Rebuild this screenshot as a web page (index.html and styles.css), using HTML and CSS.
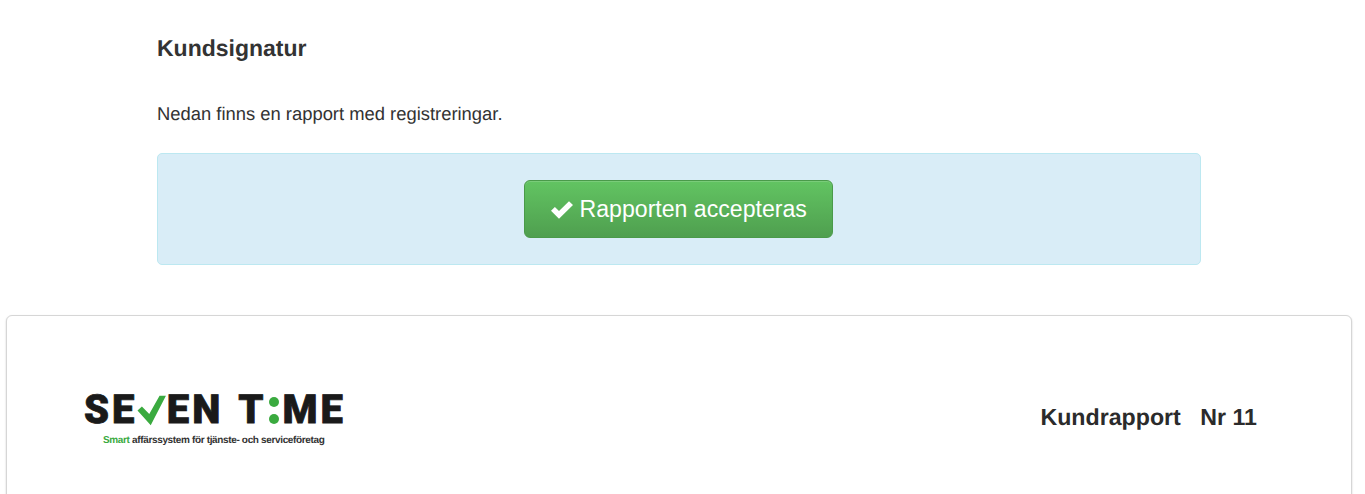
FILE: index.html
```html
<!DOCTYPE html>
<html lang="sv">

<head>
  <meta charset="UTF-8">
  <meta name="viewport" content="width=device-width, initial-scale=1.0">
  <title>Kundsignatur</title>
  <link rel="stylesheet" href="styles.css">
</head>

<body>
  <div class="page">
    <section class="signature">
      <h2>Kundsignatur</h2>
      <p>Nedan finns en rapport med registreringar.</p>
      <div class="alert">
        <button class="btn-success">
          <svg class="check-icon" viewBox="0 0 22 18" aria-hidden="true">
            <path d="M8 17.8 0 9.8 3.9 5.9 8 10 18 0.2 22 4.1z" />
          </svg>
          Rapporten accepteras
        </button>
      </div>
    </section>
    <section class="report-card">
      <div class="logo">
        <div class="logo-mark">
          <span>SE</span>
          <svg class="logo-check" viewBox="0 0 30 32" aria-hidden="true">
            <path d="M0.5 15.5 5 11.5 12.5 19 23 0.5H29.5L14 30.5z" />
          </svg>
          <span>EN</span>
          <span class="logo-gap">T</span>
          <span class="logo-colon"><i></i><i></i></span>
          <span>ME</span>
        </div>
        <div class="logo-tag"><b>Smart</b> affärssystem för tjänste- och serviceföretag</div>
      </div>
      <h3>Kundrapport <span class="report-nr">Nr 11</span></h3>
    </section>
  </div>
</body>

</html>
```
FILE: styles.css
```css
html,
body {
  margin: 0;
  padding: 0;
  height: 100%;
  overflow: hidden;
  background-color: #fff;
  font-family: 'Liberation Sans', Arial, sans-serif;
  color: #333;
  text-rendering: geometricPrecision;
}

.page {
  width: 1358px;
}

.signature {
  width: 1044px;
  margin: 0 auto;
  padding-top: 35px;
}

.signature h2 {
  margin: 0;
  font-size: 23px;
  line-height: 26px;
  font-weight: 700;
}

.signature p {
  margin: 41px 0 0;
  font-size: 18.4px;
  line-height: 24px;
}

.alert {
  box-sizing: border-box;
  height: 112px;
  margin-top: 27px;
  padding: 26px 1px 0 0;
  text-align: center;
  background-color: #d9edf7;
  border: 1px solid #bce8f1;
  border-radius: 5px;
}

.btn-success {
  box-sizing: border-box;
  width: 309px;
  height: 58px;
  padding: 0 0 0 1px;
  font-family: inherit;
  font-size: 23.1px;
  color: #fff;
  background-image: linear-gradient(to bottom, #62c462 0, #4f9f4f 100%);
  border: 1px solid #4a9a4a;
  border-radius: 6px;
  box-shadow: inset 0 1px 0 rgba(255, 255, 255, 0.15);
}

.check-icon {
  width: 22px;
  height: 18px;
  fill: #fff;
  vertical-align: -2px;
}

.report-card {
  box-sizing: border-box;
  height: 300px;
  margin: 50px 0 0 6px;
  width: 1346px;
  padding: 79px 94px 0 77px;
  display: flex;
  justify-content: space-between;
  background-color: #fff;
  border: 1px solid #d6d6d6;
  border-radius: 6px;
  box-shadow: 0 1px 2px rgba(0, 0, 0, 0.2);
}

.logo {
  width: 262px;
}

.logo-mark {
  display: flex;
  align-items: center;
  height: 30px;
  font-family: Roboto, 'Liberation Sans', sans-serif;
  font-size: 40px;
  font-weight: 900;
  letter-spacing: 3px;
  line-height: 30px;
  color: #1a1a1a;
  -webkit-text-stroke: 0.8px #1a1a1a;
}

.logo-check {
  width: 30px;
  height: 32px;
  margin: 2px 0 0 0;
  fill: #3aaa3f;
}

.logo-gap {
  margin-left: 15px;
}

.logo-colon {
  display: flex;
  flex-direction: column;
  gap: 7px;
  margin: 0 4px 0 2px;
}

.logo-colon i {
  width: 10px;
  height: 10px;
  border-radius: 50%;
  background-color: #3aaa3f;
}

.logo-tag {
  margin: 10px 0 0 19px;
  font-size: 10px;
  font-weight: 700;
  letter-spacing: -0.35px;
  line-height: 12px;
  white-space: nowrap;
  color: #333;
}

.logo-tag b {
  color: #3aaa3f;
}

.report-card h3 {
  margin: 9px 0 0;
  font-size: 23.2px;
  line-height: 26px;
  font-weight: 700;
  color: #2b2b2b;
}

.report-nr {
  margin-left: 13px;
}
```
